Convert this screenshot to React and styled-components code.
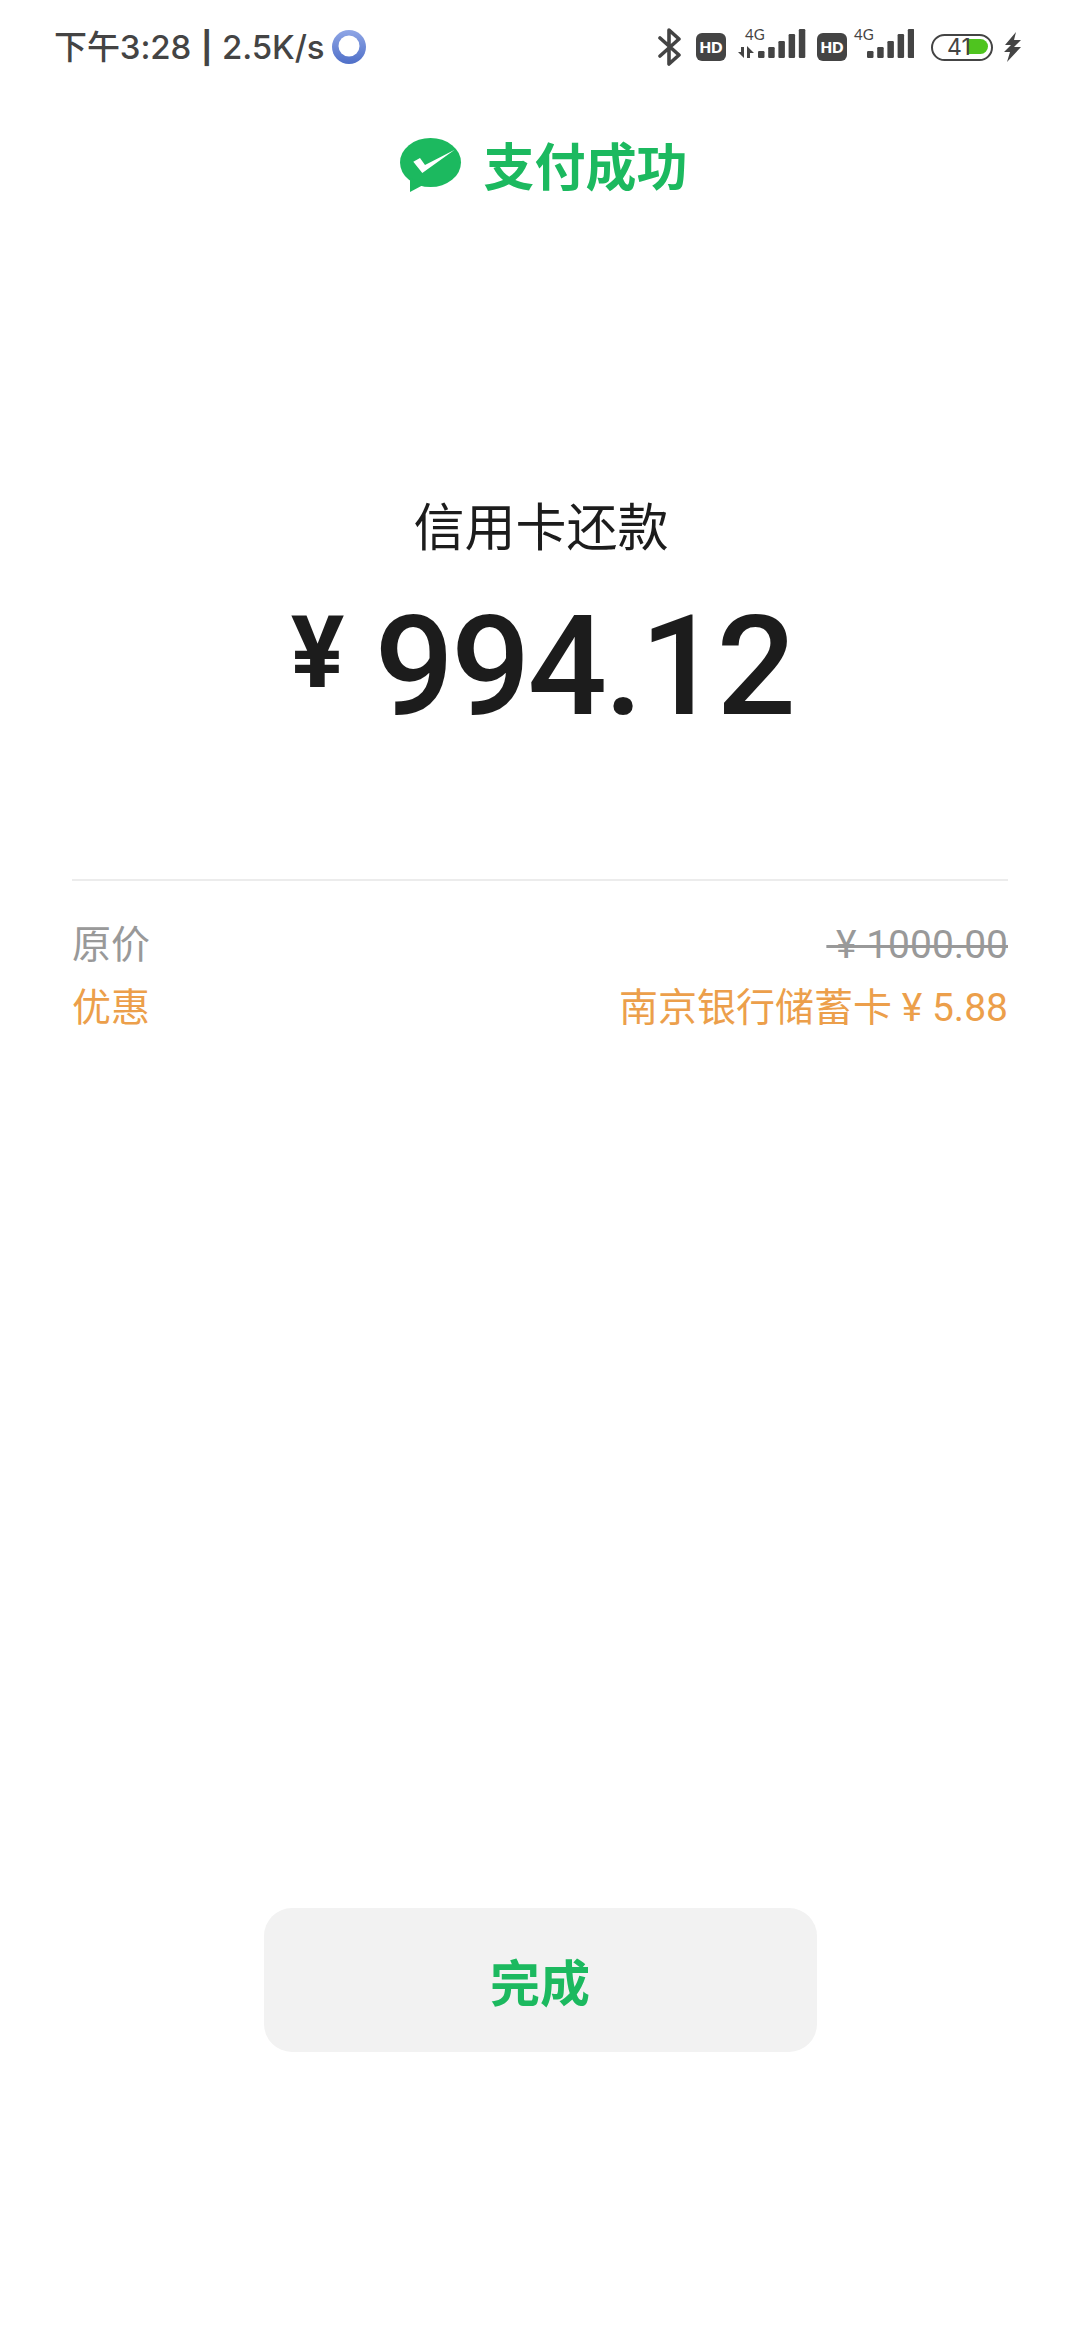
import React from "react";
import styled, { createGlobalStyle } from "styled-components";

const Global = createGlobalStyle`
  html, body { margin: 0; padding: 0; background: #fff; }
  * { box-sizing: border-box; }
`;
const LATIN = `Roboto, "Noto Sans CJK SC", sans-serif`;
const GREEN = "#1cb95f";
const INK = "#1c1c1c";
const ICON = "#444";

const Page = styled.div`
  width: 1080px; height: 2340px; display: flex; flex-direction: column;
  background: #fff; font-family: ${LATIN}; overflow: hidden;
`;
const StatusBar = styled.div`
  height: 94px; display: flex; align-items: center; justify-content: space-between;
  padding: 0 58px 0 54px; color: ${ICON};
`;
const StatusLeft = styled.div`display: flex; align-items: center; gap: 8px;`;
const Clock = styled.span`font: 500 33px/40px Inter, "Noto Sans CJK SC", sans-serif; letter-spacing: -0.1px;`;
const Sep = styled.span`font: 700 31px/40px Inter, sans-serif; margin: 0 1px;`;
const StatusRight = styled.div`display: flex; align-items: center;`;
const HdBadge = styled.span`
  width: 30px; height: 28px; border-radius: 6px; background: ${ICON}; color: #fff;
  display: flex; align-items: center; justify-content: center;
  font: 800 15px/1 Lato, sans-serif; margin-left: ${p => p.$ml}px;
`;
const Signal = styled.div`
  position: relative; width: ${p => p.$w}px; height: 34px; margin-left: ${p => p.$ml}px; margin-top: -4px;
`;
const FourG = styled.span`
  position: absolute; left: ${p => p.$x}px; top: -1px; font: 400 15px/14px Lato, sans-serif; color: ${ICON};
`;
const SignalArt = styled.svg`display: block;`;
const Battery = styled.div`
  position: relative; width: 62px; height: 27px; border: 2.5px solid ${ICON}; border-radius: 14px; margin-left: ${p => p.$ml}px;
  display: flex; align-items: center; padding-left: 14px;
`;
const BatteryFill = styled.span`
  position: absolute; left: 34px; top: 3.5px; width: 21px; height: 15px; background: #4fc41f; border-radius: 1px 8px 8px 1px;
`;
const BatteryText = styled.span`position: relative; font: 400 23px/1 Inter, sans-serif; color: ${ICON};`;
const Bolt = styled.svg`display: block; margin-left: 11px;`;
const Bluetooth = styled.svg`display: block;`;

const Header = styled.div`
  margin-top: 40px; height: 60px; display: flex; justify-content: center; align-items: center; gap: 21px; padding-left: 8px;
`;
const WeChat = styled.svg`display: block; margin-top: 4px;`;
const HeaderTitle = styled.h1`
  margin: 0; font: 700 51px/60px "Noto Sans CJK SC", sans-serif; color: ${GREEN};
`;
const Title = styled.div`
  margin-top: 300px; padding-left: 2px; text-align: center; font: 400 51px/60px "Noto Sans CJK SC", sans-serif; color: ${INK};
`;
const Amount = styled.div`
  margin-top: 47px; padding-left: 4px; height: 130px; text-align: center; color: ${INK}; white-space: nowrap;
  font: 500 140px/130px ${LATIN}; letter-spacing: -3px;
`;
const Yen = styled.span`
  font: 700 100px/1 ${LATIN}; letter-spacing: 0; margin-right: 30px; vertical-align: 27px;
`;
const Details = styled.div`
  margin: 148px 72px 0; padding-top: 33px; border-top: 2px solid #ececec;
`;
const Row = styled.div`
  display: flex; justify-content: space-between; align-items: center; height: 63px;
  font: 400 39px/63px ${LATIN}; color: ${p => p.$tone};
`;
const Struck = styled.span`text-decoration: line-through; text-decoration-thickness: 3px;`;
const Footer = styled.div`margin-top: auto; padding-bottom: 288px; display: flex; justify-content: center;`;
const DoneButton = styled.button`
  width: 553px; height: 144px; border: 0; border-radius: 28px; background: #f2f2f2; color: ${GREEN};
  font: 700 50px/1 "Noto Sans CJK SC", sans-serif;
`;

const bars = (x0, tops, w = 6.5) => tops.map((t, i) => (
  <rect key={i} x={x0 + i * 10.2} y={t} width={w} height={30 - t} rx="1.2" fill={ICON} />
));

export default function App() {
  return (
    <Page>
      <Global />
      <StatusBar>
        <StatusLeft>
          <Clock>下午3:28 <Sep>|</Sep> 2.5K/s</Clock>
          <svg width="34" height="34" viewBox="0 0 34 34">
            <defs>
              <linearGradient id="ring" x1="0" y1="0" x2="0" y2="1">
                <stop offset="0" stopColor="#8fa6e6" />
                <stop offset="1" stopColor="#4f6fc8" />
              </linearGradient>
            </defs>
            <circle cx="17" cy="17" r="17" fill="url(#ring)" />
            <circle cx="17" cy="16" r="10.5" fill="#fff" />
          </svg>
        </StatusLeft>
        <StatusRight>
          <Bluetooth width="24" height="38" viewBox="0 0 24 38">
            <path d="M2 10 L21 27 L11 36 V2 L21 11 L2 28" fill="none" stroke={ICON} strokeWidth="3.6" strokeLinecap="round" strokeLinejoin="round" />
          </Bluetooth>
          <HdBadge $ml={14}>HD</HdBadge>
          <Signal $w={68} $ml={12}>
            <FourG $x={7}>4G</FourG>
            <SignalArt width="68" height="34" viewBox="0 0 68 34">
              <path d="M0 24 H3 V19 H6 V30 Z M9 18 L16 25 H12 V30 H9 Z" fill={ICON} />
              {bars(20, [23, 19, 13, 6, 1])}
            </SignalArt>
          </Signal>
          <HdBadge $ml={11}>HD</HdBadge>
          <Signal $w={60} $ml={7}>
            <FourG $x={0}>4G</FourG>
            <SignalArt width="60" height="34" viewBox="0 0 60 34">
              {bars(13, [23, 19, 13, 6, 1])}
            </SignalArt>
          </Signal>
          <Battery $ml={17}>
            <BatteryFill />
            <BatteryText>41</BatteryText>
          </Battery>
          <Bolt width="18" height="30" viewBox="0 0 18 30">
            <path d="M12 0 L1 13 H7 L0 20 H6 L3 30 L17 15 H10 L17 8 H10 Z" fill={ICON} />
          </Bolt>
        </StatusRight>
      </StatusBar>

      <Header>
        <WeChat width="62" height="56" viewBox="0 0 62 56">
          <ellipse cx="30.5" cy="24.5" rx="30.5" ry="24.5" fill={GREEN} />
          <path d="M10 40 L10 54 L25 46 Z" fill={GREEN} />
          <path d="M13.3 23.7 L20 20 L25 27 L54.7 11.7 L22.3 35 Z" fill="#fff" />
        </WeChat>
        <HeaderTitle>支付成功</HeaderTitle>
      </Header>

      <Title>信用卡还款</Title>
      <Amount>
        <Yen>¥</Yen>994.12
      </Amount>

      <Details>
        <Row $tone="#999">
          <span>原价</span>
          <Struck>&nbsp;¥ 1000.00</Struck>
        </Row>
        <Row $tone="#ec9f4b">
          <span>优惠</span>
          <span>南京银行储蓄卡 ¥ 5.88</span>
        </Row>
      </Details>

      <Footer>
        <DoneButton>完成</DoneButton>
      </Footer>
    </Page>
  );
}
